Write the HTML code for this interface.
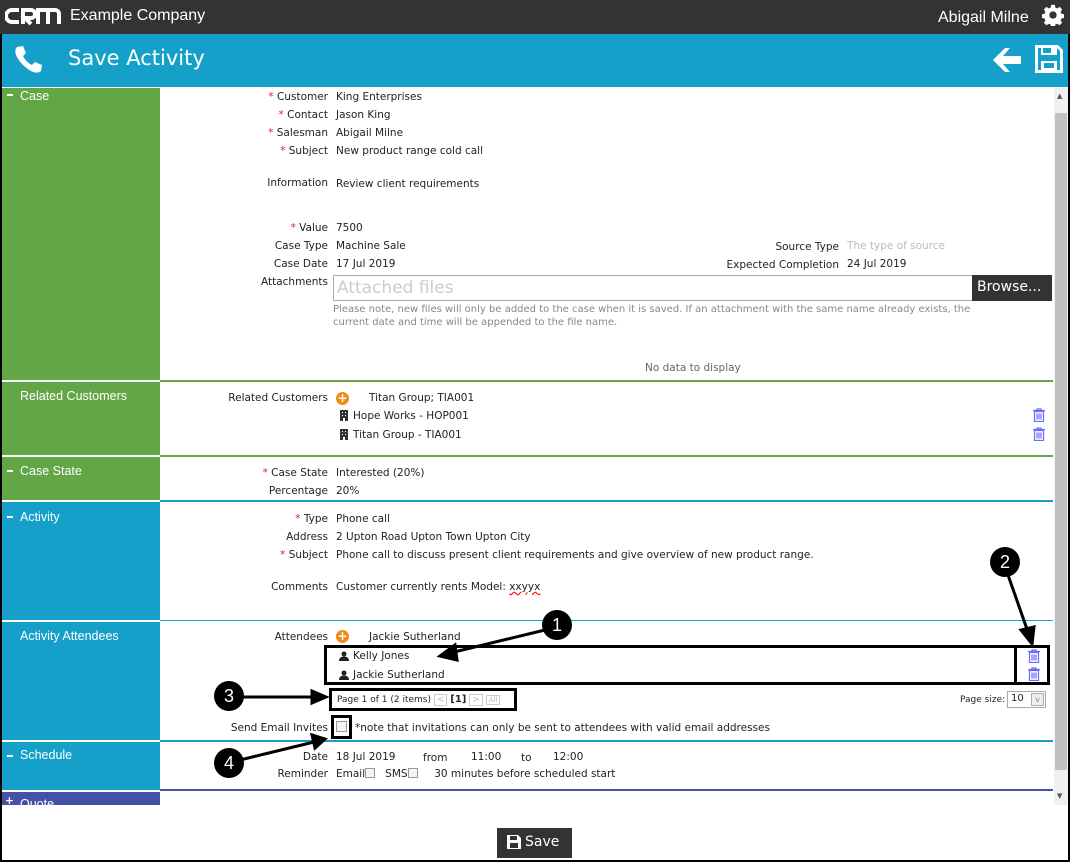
<!DOCTYPE html>
<html><head><meta charset="utf-8"><style>
*{margin:0;padding:0;box-sizing:border-box}
body{width:1070px;height:862px;position:relative;overflow:hidden;background:#fff;font-family:"DejaVu Sans","Liberation Sans",sans-serif;font-size:10.5px;color:#222}
.a{position:absolute;white-space:nowrap}
.l{position:absolute;left:128px;width:200px;text-align:right;white-space:nowrap}
.v{position:absolute;left:336px;white-space:nowrap}
.r{color:#e02020}
.side{position:absolute;left:2px;width:158px;color:#fff;font-size:12.5px;padding:0 0 0 18px;font-family:"Liberation Sans",sans-serif}
.hl{position:absolute;left:160px;width:893px;height:2px}
.c{position:absolute;width:30px;height:30px;border-radius:50%;background:#000;color:#fff;font:18px "Liberation Sans",sans-serif;text-align:center;line-height:30px}
.box{position:absolute;border:3px solid #000}
.plus{display:inline-block;width:13px;height:13px;border-radius:50%;background:#f08a1c;color:#fff;font-weight:bold;font-size:12px;line-height:13px;text-align:center;vertical-align:-2px}
.cb{display:inline-block;width:10px;height:10px;border:1px solid #999;background:#f4f4f4;vertical-align:-1px}
.dash{position:absolute;left:7px;width:6px;height:2px;background:#fff}
</style></head><body>
<svg width="0" height="0" style="position:absolute"><defs>
<symbol id="tr" viewBox="0 0 14 14"><path fill="none" stroke="#6a6aff" stroke-width="1.2" d="M1 2.5h12M5 2.5V1h4v1.5M2.5 3.5h9v10h-9zM5 5.5v6M7 5.5v6M9 5.5v6"/></symbol>
<symbol id="pp" viewBox="0 0 10 10"><circle cx="5" cy="3" r="2.5" fill="#222"/><path fill="#222" d="M0 10c0-3 2-4.5 5-4.5s5 1.5 5 4.5z"/></symbol>
<symbol id="bd" viewBox="0 0 8 11"><path fill="#333" d="M0 0h8v11H5V8H3v3H0z"/><path fill="#fff" d="M2 2h1v1H2zM5 2h1v1H5zM2 5h1v1H2zM5 5h1v1H5z"/></symbol>
</defs></svg>
<div class="a" style="left:0;top:0;width:1070px;height:862px;border:2px solid #000;border-top:0"></div>
<div class="a" style="left:0;top:0;width:1070px;height:34px;background:#333"></div>
<svg class="a" style="left:5px;top:6px" width="56" height="20" viewBox="0 0 56 20"><g fill="none" stroke="#fff" stroke-width="4"><path d="M14 4H7a5 5 0 0 0 0 12h7"/><path d="M18 18V4h8a4 4 0 0 1 0 8h-6l6 6"/><path d="M33 18V4h10v14M43 4h7a4 4 0 0 1 4 4v10"/></g></svg>
<div class="a" style="left:70px;top:7px;color:#fff;font:16px 'Liberation Sans',sans-serif">Example Company</div>
<div class="a" style="left:938px;top:9px;color:#fff;font:16px 'Liberation Sans',sans-serif">Abigail Milne</div>
<svg class="a" style="left:1042px;top:4px" width="22" height="22" viewBox="0 0 24 24"><path fill="#fff" d="M10 1h4l.6 3 2 .9 2.6-1.7 2.8 2.8-1.7 2.6.9 2 3 .6v4l-3 .6-.9 2 1.7 2.6-2.8 2.8-2.6-1.7-2 .9-.6 3h-4l-.6-3-2-.9-2.6 1.7-2.8-2.8 1.7-2.6-.9-2-3-.6v-4l3-.6.9-2-1.7-2.6 2.8-2.8 2.6 1.7 2-.9z"/><circle cx="12" cy="12" r="4" fill="#333"/></svg>
<div class="a" style="left:2px;top:34px;width:1066px;height:53px;background:#14a0c8"></div>
<svg class="a" style="left:13px;top:44px" width="30" height="30" viewBox="0 0 30 30"><path fill="#fff" d="M4 3l6-1 3 7-3 3c2 4 5 7 9 9l3-3 7 3-1 6c-2 2-5 2-8 1C13 25 6 18 3 11 2 8 2 5 4 3z"/></svg>
<div class="a" style="left:68px;top:46px;color:#fff;font-size:21px;font-family:'DejaVu Sans',sans-serif">Save Activity</div>
<svg class="a" style="left:992px;top:46px" width="30" height="28" viewBox="0 0 30 28"><path fill="#fff" d="M1 14L13 2h5l-7 8h18v8H11l7 8h-5z"/></svg>
<svg class="a" style="left:1034px;top:44px" width="30" height="30" viewBox="0 0 30 30"><path fill="#fff" d="M1 1h23l5 5v23H1zM4 4v22h22V7l-3-3v7H7V4zM9 4v5h8V4zM7 17h16v9H7z"/><rect x="10" y="19" width="10" height="5" fill="#14a0c8"/></svg>

<div class="side" style="top:88px;height:292px;background:#62a646;padding-top:1px">Case</div>
<div class="side" style="top:382px;height:73px;background:#62a646;padding-top:7px">Related Customers</div>
<div class="side" style="top:457px;height:43px;background:#62a646;padding-top:7px">Case State</div>
<div class="side" style="top:502px;height:118px;background:#14a0c8;padding-top:8px">Activity</div>
<div class="side" style="top:622px;height:118px;background:#14a0c8;padding-top:7px">Activity Attendees</div>
<div class="side" style="top:742px;height:48px;background:#14a0c8;padding-top:6px">Schedule</div>
<div class="side" style="top:792px;height:13px;background:#4352a6;overflow:hidden;padding-top:5px">Quote</div>
<div class="dash" style="top:94px"></div>
<div class="dash" style="top:470px"></div>
<div class="dash" style="top:516px"></div>
<div class="dash" style="top:755px"></div>
<div class="a" style="left:5px;top:795px;color:#fff;font-weight:bold">+</div>

<div class="hl" style="top:380px;background:#62a646"></div>
<div class="hl" style="top:455px;background:#62a646"></div>
<div class="hl" style="top:500px;background:#14a0c8"></div>
<div class="hl" style="top:620px;height:1px;background:#14a0c8"></div>
<div class="hl" style="top:740px;background:#14a0c8"></div>
<div class="hl" style="top:789px;background:#4352a6"></div>

<div class="a" style="left:1054px;top:88px;width:14px;height:717px;background:#f0f0f0"></div>
<div class="a" style="left:1055px;top:113px;width:12px;height:657px;background:#c1c1c1"></div>
<div class="a" style="left:1057px;top:92px;font-size:7px;color:#555">▲</div>
<div class="a" style="left:1057px;top:792px;font-size:7px;color:#555">▼</div>

<div class="l" style="top:91px"><span class="r">*</span> Customer</div><div class="v" style="top:91px">King Enterprises</div>
<div class="l" style="top:109px"><span class="r">*</span> Contact</div><div class="v" style="top:109px">Jason King</div>
<div class="l" style="top:127px"><span class="r">*</span> Salesman</div><div class="v" style="top:127px">Abigail Milne</div>
<div class="l" style="top:145px"><span class="r">*</span> Subject</div><div class="v" style="top:145px">New product range cold call</div>
<div class="l" style="top:177px">Information</div><div class="v" style="top:178px">Review client requirements</div>
<div class="l" style="top:222px"><span class="r">*</span> Value</div><div class="v" style="top:222px">7500</div>
<div class="l" style="top:240px">Case Type</div><div class="v" style="top:240px">Machine Sale</div>
<div class="l" style="top:258px">Case Date</div><div class="v" style="top:258px">17 Jul 2019</div>
<div class="a" style="left:500px;width:339px;text-align:right;top:241px">Source Type</div><div class="a" style="left:847px;top:240px;color:#bbb">The type of source</div>
<div class="a" style="left:500px;width:339px;text-align:right;top:259px">Expected Completion</div><div class="a" style="left:847px;top:258px">24 Jul 2019</div>
<div class="l" style="top:276px">Attachments</div>
<div class="a" style="left:333px;top:275px;width:640px;height:26px;border:1px solid #aaa;color:#ccc;font-size:17px;padding:2px 3px">Attached files</div>
<div class="a" style="left:972px;top:275px;width:80px;height:26px;background:#333;color:#fff;font-size:14px;padding:4px 5px">Browse...</div>
<div class="a" style="left:333px;top:303px;color:#888;font-size:10px;line-height:13px">Please note, new files will only be added to the case when it is saved. If an attachment with the same name already exists, the<br>current date and time will be appended to the file name.</div>
<div class="a" style="left:645px;top:362px;color:#666">No data to display</div>

<div class="l" style="top:392px">Related Customers</div><div class="v" style="top:391px"><span class="plus">+</span></div><div class="a" style="left:369px;top:392px">Titan Group; TIA001</div>
<svg class="a" style="left:340px;top:410px" width="8" height="11"><use href="#bd"/></svg><div class="a" style="left:353px;top:410px">Hope Works - HOP001</div>
<svg class="a" style="left:340px;top:429px" width="8" height="11"><use href="#bd"/></svg><div class="a" style="left:353px;top:429px">Titan Group - TIA001</div>
<svg class="a" style="left:1032px;top:408px" width="14" height="14"><use href="#tr"/></svg>
<svg class="a" style="left:1032px;top:427px" width="14" height="14"><use href="#tr"/></svg>

<div class="l" style="top:467px"><span class="r">*</span> Case State</div><div class="v" style="top:467px">Interested (20%)</div>
<div class="l" style="top:485px">Percentage</div><div class="v" style="top:485px">20%</div>

<div class="l" style="top:513px"><span class="r">*</span> Type</div><div class="v" style="top:513px">Phone call</div>
<div class="l" style="top:531px">Address</div><div class="v" style="top:531px">2 Upton Road Upton Town Upton City</div>
<div class="l" style="top:549px"><span class="r">*</span> Subject</div><div class="v" style="top:549px">Phone call to discuss present client requirements and give overview of new product range.</div>
<div class="l" style="top:581px">Comments</div><div class="v" style="top:581px">Customer currently rents Model: <span style="text-decoration:underline wavy red">xxyyx</span></div>

<div class="l" style="top:631px">Attendees</div><div class="v" style="top:629px"><span class="plus">+</span></div><div class="a" style="left:369px;top:631px">Jackie Sutherland</div>
<svg class="a" style="left:339px;top:651px" width="10" height="10"><use href="#pp"/></svg><div class="a" style="left:353px;top:650px">Kelly Jones</div>
<svg class="a" style="left:339px;top:670px" width="10" height="10"><use href="#pp"/></svg><div class="a" style="left:353px;top:669px">Jackie Sutherland</div>
<svg class="a" style="left:1027px;top:649px" width="14" height="14"><use href="#tr"/></svg>
<svg class="a" style="left:1027px;top:667px" width="14" height="14"><use href="#tr"/></svg>
<div class="a" style="left:337px;top:694px;font-size:9px">Page 1 of 1 (2 items) <span style="color:#bbb;border:1px solid #ccc;padding:0 2px">&lt;</span> <b style="font-size:10px">[1]</b> <span style="color:#bbb;border:1px solid #ccc;padding:0 2px">&gt;</span> <span style="color:#bbb;border:1px solid #ccc;padding:0 2px;font-size:7px">All</span></div>
<div class="a" style="left:960px;top:695px;font-size:9px">Page size:</div>
<div class="a" style="left:1007px;top:691px;width:39px;height:17px;border:1px solid #aaa;font-size:10px;padding:1px 3px">10</div>
<div class="a" style="left:1031px;top:693px;width:13px;height:13px;border:1px solid #aaa;background:#eee;font-size:8px;color:#888;text-align:center;line-height:12px">v</div>
<div class="l" style="top:722px">Send Email Invites</div>
<div class="a" style="left:336px;top:721px"><span class="cb" style="width:11px;height:11px"></span></div>
<div class="a" style="left:355px;top:722px">*note that invitations can only be sent to attendees with valid email addresses</div>

<div class="l" style="top:751px">Date</div><div class="v" style="top:751px">18 Jul 2019</div>
<div class="a" style="left:423px;top:752px">from</div><div class="a" style="left:471px;top:751px">11:00</div>
<div class="a" style="left:521px;top:752px">to</div><div class="a" style="left:553px;top:751px">12:00</div>
<div class="l" style="top:768px">Reminder</div><div class="v" style="top:768px">Email<span class="cb"></span> &nbsp; SMS<span class="cb"></span> &nbsp;&nbsp;&nbsp; 30 minutes before scheduled start</div>

<div class="a" style="left:497px;top:828px;width:75px;height:30px;background:#333;color:#fff;font-size:14px;padding:6px 0 0 28px">Save</div>
<svg class="a" style="left:507px;top:835px" width="14" height="14" viewBox="0 0 14 14"><path fill="#fff" d="M0 0h11l3 3v11H0zM3 1v4h7V1zM3 8v5h8V8z"/></svg>

<div class="box" style="left:324px;top:645px;width:693px;height:40px"></div>
<div class="box" style="left:1014px;top:645px;width:36px;height:40px"></div>
<div class="box" style="left:329px;top:688px;width:188px;height:23px"></div>
<div class="box" style="left:331px;top:715px;width:21px;height:24px"></div>
<svg class="a" style="left:0;top:0" width="1070" height="862">
<g stroke="#000" stroke-width="3" fill="#000">
<line x1="545" y1="630" x2="450" y2="653"/><polygon points="440,656 455,645 457,660"/>
<line x1="1008" y1="575" x2="1028" y2="632"/><polygon points="1032,644 1021,630 1034,627"/>
<line x1="240" y1="697" x2="314" y2="697"/><polygon points="326,697 312,691 312,703"/>
<line x1="240" y1="760" x2="314" y2="742"/><polygon points="325,739 312,735 315,748"/>
</g></svg>
<div class="c" style="left:542px;top:610px">1</div>
<div class="c" style="left:990px;top:547px">2</div>
<div class="c" style="left:214px;top:681px">3</div>
<div class="c" style="left:214px;top:748px">4</div>
</body></html>
